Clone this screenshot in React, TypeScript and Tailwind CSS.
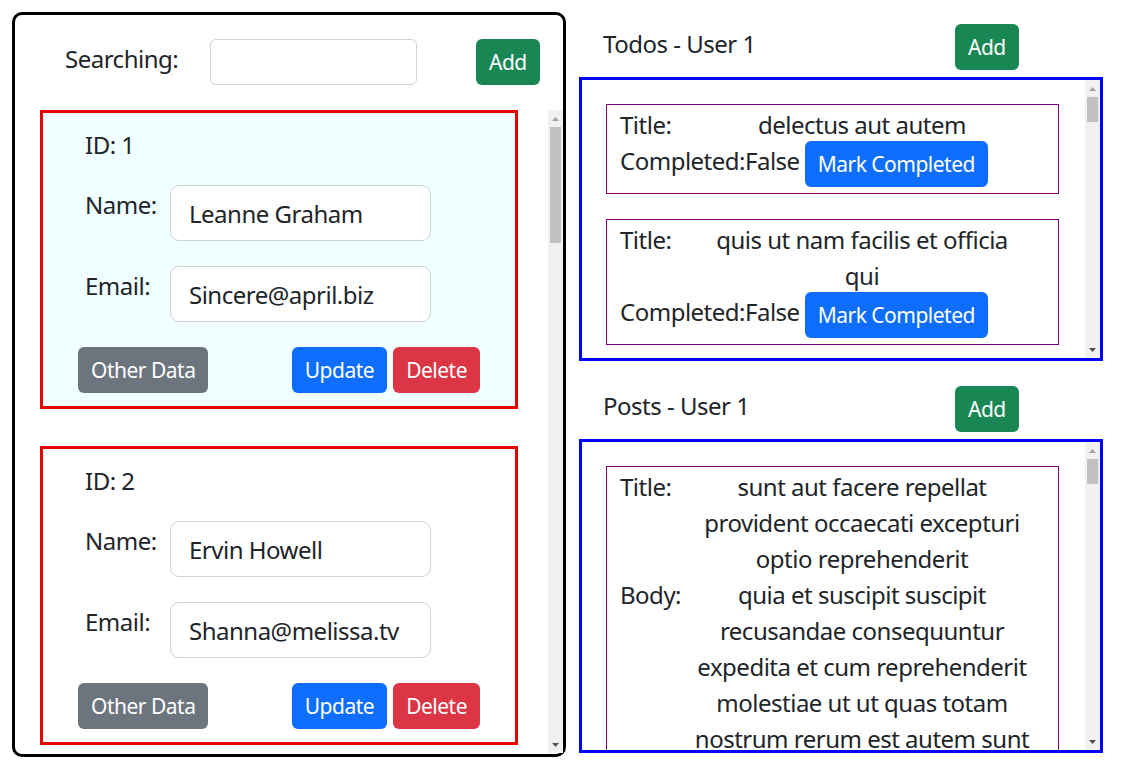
const users = [
  { id: 1, name: "Leanne Graham", email: "Sincere@april.biz" },
  { id: 2, name: "Ervin Howell", email: "Shanna@melissa.tv" },
  { id: 3, name: "Clementine Bauch", email: "Nathan@yesenia.net" },
  { id: 4, name: "Patricia Lebsack", email: "Julianne.OConner@kory.org" },
  { id: 5, name: "Chelsey Dietrich", email: "Lucio_Hettinger@annie.ca" },
  { id: 6, name: "Mrs. Dennis Schulist", email: "Karley_Dach@jasper.info" },
  { id: 7, name: "Kurtis Weissnat", email: "Telly.Hoeger@billy.biz" },
  { id: 8, name: "Nicholas Runolfsdottir V", email: "Sherwood@rosamond.me" },
  { id: 9, name: "Glenna Reichert", email: "Chaim_McDermott@dana.io" },
  { id: 10, name: "Clementina DuBuque", email: "Rey.Padberg@karina.biz" },
];

const todos = [
  "delectus aut autem",
  "quis ut nam facilis et officia\nqui",
  "fugiat veniam minus",
  "et porro tempora",
  "laboriosam mollitia et enim quasi adipisci quia provident illum",
  "qui ullam ratione quibusdam voluptatem quia omnis",
  "illo expedita consequatur quia in",
  "quo adipisci enim quam ut ab",
];

const posts = [
  {
    title: "sunt aut facere repellat\nprovident occaecati excepturi\noptio reprehenderit",
    body: "quia et suscipit suscipit\nrecusandae consequuntur\nexpedita et cum reprehenderit\nmolestiae ut ut quas totam\nnostrum rerum est autem sunt\nrem eveniet architecto",
  },
  {
    title: "qui est esse",
    body: "est rerum tempore vitae sequi sint nihil reprehenderit dolor beatae ea dolores neque",
  },
];

function Btn({ color, children }: { color: string; children: React.ReactNode }) {
  return (
    <button className={`${color} h-[46px] px-[13px] rounded-[6px] text-white text-[21px] leading-none flex items-center whitespace-nowrap`}>
      {children}
    </button>
  );
}

// drawn scrollbar, the page is photographed without native ones
function ScrollBar({ thumb }: { thumb: number }) {
  return (
    <div className="w-[15px] shrink-0 h-full bg-[#f1f1f1] flex flex-col">
      <div className="h-[17px] flex items-center justify-center">
        <svg width="7" height="4" viewBox="0 0 7 4">
          <path d="M3.5 0 L7 4 L0 4 Z" fill="#a3a3a3" />
        </svg>
      </div>
      <div className="flex-1">
        <div className="mx-[2px] bg-[#c1c1c1]" style={{ height: thumb }} />
      </div>
      <div className="h-[17px] flex items-center justify-center">
        <svg width="7" height="4" viewBox="0 0 7 4">
          <path d="M0 0 L7 0 L3.5 4 Z" fill="#505050" />
        </svg>
      </div>
    </div>
  );
}

function UserCard({ user }: { user: { id: number; name: string; email: string } }) {
  return (
    <div
      className={`w-[478px] h-[299px] shrink-0 border-[3px] border-[#e60000] pt-[14px] mb-[37px] ${
        user.id === 1 ? "bg-[#f0ffff]" : "bg-white"
      }`}
    >
      <div className="pl-[42px]">ID: {user.id}</div>
      <div className="pl-[42px] mt-[22px] flex items-start">
        <label className="w-[85px] mt-[2px]">Name:</label>
        <input
          type="text"
          defaultValue={user.name}
          className="w-[261px] h-[56px] rounded-[9px] border border-[#ced4da] bg-white px-[18px] text-[24px] outline-none"
        />
      </div>
      <div className="pl-[42px] mt-[25px] flex items-start">
        <label className="w-[85px] mt-[2px]">Email:</label>
        <input
          type="text"
          defaultValue={user.email}
          className="w-[261px] h-[56px] rounded-[9px] border border-[#ced4da] bg-white px-[18px] text-[24px] outline-none"
        />
      </div>
      <div className="mt-[25px] px-[35px] flex justify-between">
        <Btn color="bg-[#6c757d]">Other Data</Btn>
        <div className="flex gap-[6px]">
          <Btn color="bg-[#0d6efd]">Update</Btn>
          <Btn color="bg-[#dc3545]">Delete</Btn>
        </div>
      </div>
    </div>
  );
}

function Row({ label, value }: { label: string; value: string }) {
  return (
    <div className="flex">
      <div className="w-[72px] shrink-0">{label}</div>
      <div className="w-[340px] text-center whitespace-pre-line">{value}</div>
    </div>
  );
}

export default function App() {
  return (
    <div className="min-h-screen bg-white text-[#212529] text-[24px] leading-[36px] tracking-[-0.5px] font-['Noto_Sans',sans-serif] flex items-start pt-[12px] pl-[12px]">
      {/* users */}
      <div className="w-[554px] h-[745px] border-[3px] border-black rounded-[10px] flex flex-col">
        <div className="flex items-start pt-[24px] pl-[50px]">
          <label className="w-[145px] mt-[2px]">Searching:</label>
          <input
            type="text"
            className="w-[207px] h-[46px] rounded-[6px] border border-[#ced4da] px-[12px] text-[21px] outline-none"
          />
          <div className="ml-[59px]">
            <Btn color="bg-[#198754]">Add</Btn>
          </div>
        </div>
        <div className="ml-[25px] mt-[25px] mb-[1px] flex-1 min-h-0 flex">
          <div className="flex-1 overflow-hidden flex flex-col">
            {users.map((u) => (
              <UserCard key={u.id} user={u} />
            ))}
          </div>
          <ScrollBar thumb={116} />
        </div>
      </div>

      {/* todos + posts */}
      <div className="ml-[13px] w-[524px] pt-[12px]">
        <div className="flex items-start">
          <div className="w-[376px] pl-[24px] mt-[2px]">Todos - User 1</div>
          <Btn color="bg-[#198754]">Add</Btn>
        </div>
        <div className="mt-[7px] h-[284px] border-[3px] border-[#0000ff] flex">
          <div className="flex-1 overflow-hidden pl-[24px] pt-[24px]">
            {todos.map((t, i) => (
              <div key={i} className="w-[453px] border border-[#800080] px-[13px] pt-[2px] pb-[6px] mb-[25px]">
                <Row label="Title:" value={t} />
                <div className="flex items-start gap-[5px] -mt-[2px]">
                  <span className="mt-[2px]">Completed:False</span>
                  <Btn color="bg-[#0d6efd]">Mark Completed</Btn>
                </div>
              </div>
            ))}
          </div>
          <ScrollBar thumb={25} />
        </div>

        <div className="mt-[25px] flex items-start">
          <div className="w-[376px] pl-[24px] mt-[2px]">Posts - User 1</div>
          <Btn color="bg-[#198754]">Add</Btn>
        </div>
        <div className="mt-[7px] h-[314px] border-[3px] border-[#0000ff] flex">
          <div className="flex-1 overflow-hidden pl-[24px] pt-[24px]">
            {posts.map((p, i) => (
              <div key={i} className="w-[453px] border border-[#800080] px-[13px] pt-[2px] pb-[6px] mb-[25px]">
                <Row label="Title:" value={p.title} />
                <Row label="Body:" value={p.body} />
              </div>
            ))}
          </div>
          <ScrollBar thumb={25} />
        </div>
      </div>
    </div>
  );
}
